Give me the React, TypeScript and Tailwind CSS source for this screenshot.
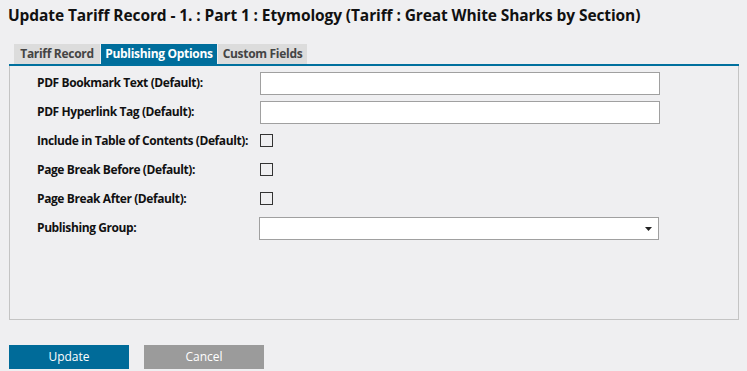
const rows = [
  { label: "PDF Bookmark Text (Default):", kind: "text" },
  { label: "PDF Hyperlink Tag (Default):", kind: "text" },
  { label: "Include in Table of Contents (Default):", kind: "check" },
  { label: "Page Break Before (Default):", kind: "check" },
  { label: "Page Break After (Default):", kind: "check" },
  { label: "Publishing Group:", kind: "select" },
];

const App = () => {
  return (
    <div className="h-[371px] w-[747px] overflow-hidden bg-[#efeff1] font-['Open_Sans',sans-serif] text-[#111]">
      <h1 className="pl-[8px] pt-[4px] text-[15.5px] font-bold leading-[22px] tracking-[-0.1px]">
        Update Tariff Record - 1. : Part 1 : Etymology (Tariff : Great White Sharks by Section)
      </h1>

      <div className="ml-[9px] mt-[18px] w-[730px]">
        <div className="flex h-[20px] pl-[5px] text-[12px] font-bold leading-[20px] tracking-[-0.3px]">
          <div className="w-[86px] bg-[#dcdcdc] text-center text-[#444]">Tariff Record</div>
          <div className="ml-[1px] w-[116px] bg-[#006e9c] text-center text-white">Publishing Options</div>
          <div className="ml-[1px] w-[89px] bg-[#dcdcdc] text-center text-[#444]">Custom Fields</div>
        </div>
        <div className="h-[2px] bg-[#00709e]" />
        <div className="h-[254px] border-x border-b border-[#c4c4c4] pl-[27px] pt-[6px]">
          {rows.map((r) => (
            <div key={r.label} className="flex h-[29px] items-start">
              <div className="w-[223px] pt-[2px] text-[12px] font-bold leading-[18px] tracking-[-0.4px]">
                {r.label}
              </div>
              {r.kind === "text" && (
                <div className="h-[23px] w-[400px] border border-[#a0a0a0] bg-white" />
              )}
              {r.kind === "check" && (
                <div className="mt-[4px] h-[13px] w-[13px] border border-[#333] bg-transparent" />
              )}
              {r.kind === "select" && (
                <div className="-ml-[1px] flex h-[23px] w-[400px] items-center justify-end border border-[#a0a0a0] bg-white pr-[6px]">
                  <svg width="7" height="4" viewBox="0 0 7 4">
                    <path d="M0 0h7L3.5 4z" fill="#222" />
                  </svg>
                </div>
              )}
            </div>
          ))}
        </div>
      </div>

      <div className="ml-[9px] mt-[25px] flex gap-[15px] text-[12px] leading-[24px]">
        <button className="h-[24px] w-[120px] bg-[#006b99] text-center text-white">Update</button>
        <button className="h-[24px] w-[120px] bg-[#9b9b9b] text-center text-white">Cancel</button>
      </div>
    </div>
  );
};

export default App;
